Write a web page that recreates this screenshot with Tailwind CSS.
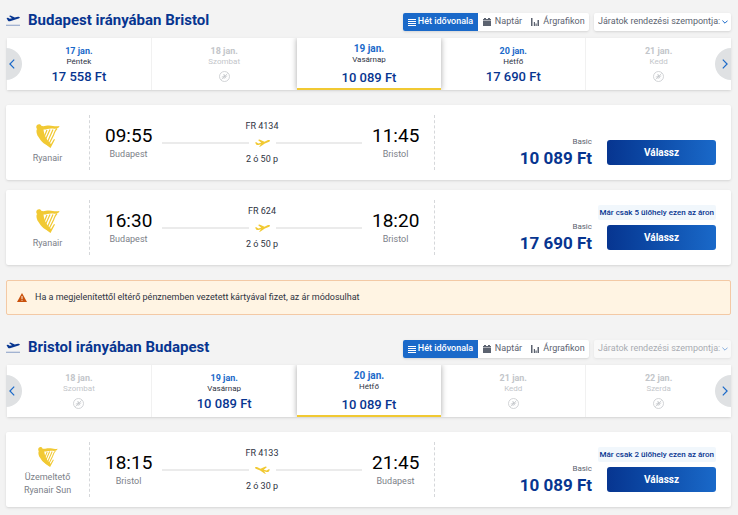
<!DOCTYPE html>
<html lang="hu">
<head>
    <meta charset="UTF-8">
    <title>Járatok kiválasztása</title>
    <meta name="viewport" content="width=device-width, initial-scale=1.0">
    <!-- Tailwind CSS CDN -->
    <script src="https://cdn.jsdelivr.net/npm/@tailwindcss/browser@4"></script>
</head>
<body class="bg-[#f3f3f3] font-[Roboto,sans-serif] text-[#2e333f] pl-1.5 pr-[7px] pt-[13px] pb-2">

    <!-- Shared icons -->
    <svg class="hidden">
        <symbol id="takeoff" viewBox="0 0 28 22">
            <path fill="currentColor" d="M1 6l3-.6 3.500 2.200 4.500-1L6 1.800 9 1l8.500 4.200L24 3.500c1.600-.4 3.200 0 3.500 1 .3 1.100-.8 2-2.300 2.500L8 12.500c-1.600.5-3 .1-4-1z"/>
            <path stroke="currentColor" stroke-width="1.500" opacity=".6" d="M0 20.500h28"/>
        </symbol>
        <symbol id="plane-up" viewBox="0 0 30 16">
            <path fill="currentColor" d="M0 7l3-.4L6.500 9l6-1.600L6 2.200 9 1.200l10 4.200L25 2.600c2-.8 4.300-.8 4.800.3.5 1.200-.8 2.300-2.600 3l-7.500 2.900L11 15l-3 .8 4-5.300-5 1.300c-2 .5-3.600.2-4.500-1z"/>
        </symbol>
        <symbol id="harp" viewBox="0 0 48 48">
            <path fill="currentColor" d="M2 2c3-3 8-2 9 2 6 1 9-1 15-1 8 0 12 3 21 1-1 5-7 6-13 5-8-1-12 2-19 2 1 10 5 20 15 29l6-10 2 1-9 17C14 38 4 27 2 10 0 8 0 4 2 2z"/>
            <path fill="currentColor" d="M2 10c-2 3-1 8 1 13l6 9c4 5 8 8 14 11L14 26z"/>
            <path fill="none" stroke="currentColor" stroke-width="2.500" d="M22 12l-5 12M28 11l-9 20M34 11L23 36M42 9c-5 5-5 8-7 13l-9 18"/>
        </symbol>
        <symbol id="no-flight" viewBox="0 0 22 22">
            <g fill="none" stroke="currentColor" stroke-width="1.500">
                <circle cx="11" cy="11" r="10"/>
                <path d="M5 17L17 5M5.500 12l11-2M9 6.500l5 8M10 16l1-9"/>
            </g>
        </symbol>
        <symbol id="chevron-left" viewBox="0 0 6 10">
            <path fill="none" stroke="currentColor" stroke-width="1.200" d="M5.200.6L.9 5l4.300 4.400"/>
        </symbol>
        <symbol id="chevron-right" viewBox="0 0 6 10">
            <path fill="none" stroke="currentColor" stroke-width="1.200" d="M.8.6L5.100 5 .8 9.400"/>
        </symbol>
        <symbol id="chevron-down" viewBox="0 0 6 4">
            <path fill="none" stroke="currentColor" d="M.4.6L3 3.200 5.600.6"/>
        </symbol>
        <symbol id="bars" viewBox="0 0 8 7">
            <path fill="currentColor" d="M0 0h8v1H0zM0 2h8v1H0zM0 4h8v1H0zM0 6h8v1H0z"/>
        </symbol>
        <symbol id="calendar" viewBox="0 0 8 8">
            <path fill="currentColor" d="M0 1h1V0h2v1h2V0h2v1h1v1.500H0zM0 3h8v5H0z"/>
        </symbol>
        <symbol id="chart" viewBox="0 0 8 8">
            <path fill="currentColor" d="M0 0h1.500v8H0zM2.800 4h1.200v4H2.800zM4.500 5.500h1.200V8H4.500zM6.500 2H8v6H6.500z"/>
        </symbol>
    </svg>

    <!-- Outbound -->
    <section>
        <div class="flex items-center h-[18px] mb-[7px]">
            <svg class="w-[14px] h-[11px] mr-2 mb-1 text-[#073590]"><use href="#takeoff"/></svg>
            <h2 class="text-[15px] leading-[18px] pb-1 font-bold text-[#073590]">Budapest irányában Bristol</h2>
            <div class="ml-auto flex h-full rounded-xs shadow-sm bg-white text-[9px] text-[#5c6370]">
                <button class="w-[75px] flex items-center justify-center gap-0.5 rounded-l-xs bg-[#1a69c9] text-white font-medium">
                    <svg class="w-2 h-[7px]"><use href="#bars"/></svg>Hét idővonala
                </button>
                <button class="w-[49px] flex items-center justify-center gap-1">
                    <svg class="w-2 h-2"><use href="#calendar"/></svg>Naptár
                </button>
                <button class="w-[62px] flex items-center justify-center gap-1">
                    <svg class="w-2 h-2"><use href="#chart"/></svg>Árgrafikon
                </button>
            </div>
            <div class="relative ml-[5px] w-[137px] h-full">
                <select aria-label="Rendezés" class="block appearance-none w-full h-full pl-1 rounded-xs bg-white shadow-sm text-[9px] text-[#5c6370]">
                    <option>Járatok rendezési szempontja:</option>
                </select>
                <svg class="absolute right-[3px] top-[7px] w-[6px] h-1 text-[#1a69c9] pointer-events-none"><use href="#chevron-down"/></svg>
            </div>
        </div>

        <div class="relative ml-px grid grid-cols-5 h-[52px] bg-white shadow-sm">
            <button class="flex flex-col items-center pt-[7px] border-r border-[#f1f1f1]">
                <span class="text-[9px] leading-3 font-bold text-[#1a69c9]">17 jan.</span>
                <span class="text-[8px] leading-[9px]">Péntek</span>
                <span class="mt-1 text-[13px] leading-[14px] font-medium text-[#073590]">17 558 Ft</span>
            </button>
            <button disabled class="flex flex-col items-center pt-[7px] text-[#c3c6ca]">
                <span class="text-[9px] leading-3 font-bold">18 jan.</span>
                <span class="text-[8px] leading-[9px]">Szombat</span>
                <svg class="mt-[5px] w-[11px] h-[11px]"><use href="#no-flight"/></svg>
            </button>
            <button class="flex flex-col items-center pt-[5px] border-b-2 border-[#f1c933] shadow-[0_0_6px_rgb(0_0_0/0.35)] [clip-path:inset(0_-8px)]">
                <span class="text-[10px] leading-3 font-bold text-[#1a69c9]">19 jan.</span>
                <span class="text-[8px] leading-[9px]">Vasárnap</span>
                <span class="mt-[7px] text-[13px] leading-[14px] font-medium text-[#073590]">10 089 Ft</span>
            </button>
            <button class="flex flex-col items-center pt-[7px] border-r border-[#f1f1f1]">
                <span class="text-[9px] leading-3 font-bold text-[#1a69c9]">20 jan.</span>
                <span class="text-[8px] leading-[9px]">Hétfő</span>
                <span class="mt-1 text-[13px] leading-[14px] font-medium text-[#073590]">17 690 Ft</span>
            </button>
            <button disabled class="flex flex-col items-center pt-[7px] text-[#c3c6ca]">
                <span class="text-[9px] leading-3 font-bold">21 jan.</span>
                <span class="text-[8px] leading-[9px]">Kedd</span>
                <svg class="mt-[5px] w-[11px] h-[11px]"><use href="#no-flight"/></svg>
            </button>
            <button aria-label="Előző" class="absolute -left-px top-[10px] w-4 h-8 rounded-r-full bg-[#dfe1e3] text-[#1a69c9] flex items-center pl-[3px]">
                <svg class="w-[6px] h-[10px]"><use href="#chevron-left"/></svg>
            </button>
            <button aria-label="Következő" class="absolute right-0 top-[10px] w-4 h-8 rounded-l-full bg-[#dfe1e3] text-[#1a69c9] flex items-center justify-end pr-[3px]">
                <svg class="w-[6px] h-[10px]"><use href="#chevron-right"/></svg>
            </button>
        </div>

        <div class="mt-[15px] space-y-[10px]">
            <article class="flex h-[75px] bg-white rounded-xs shadow-sm">
                <div class="w-[84px] my-[10px] pt-1 border-r border-dashed border-[#d5d7da] flex flex-col items-center justify-center text-[9px] leading-[13px] text-[#7b8088]">
                    <svg class="w-6 h-6 mb-1 text-[#f1c933]"><use href="#harp"/></svg>
                    Ryanair
                </div>
                <div class="flex-1 my-[10px] px-[15px] border-r border-dashed border-[#d5d7da] flex items-center gap-[10px]">
                    <div class="text-center w-[47px] pb-0.5">
                        <div class="text-[19px] leading-6 text-black">09:55</div>
                        <div class="text-[9px] leading-3 text-[#7b8088]">Budapest</div>
                    </div>
                    <div class="flex-1 text-center text-[9px] leading-[13px]">
                        <div>FR 4134</div>
                        <div class="flex items-center gap-[6px] h-5">
                            <span class="flex-1 h-0.5 bg-[#ebebeb]"></span>
                            <svg class="w-[15px] h-2 text-[#f1c933]"><use href="#plane-up"/></svg>
                            <span class="flex-1 h-0.5 bg-[#ebebeb]"></span>
                        </div>
                        <div>2 ó 50 p</div>
                    </div>
                    <div class="text-center w-[47px] pb-0.5">
                        <div class="text-[19px] leading-6 text-black">11:45</div>
                        <div class="text-[9px] leading-3 text-[#7b8088]">Bristol</div>
                    </div>
                </div>
                <div class="w-[296px] p-[15px] flex items-end justify-end gap-[15px]">
                    <div class="text-right">
                        <div class="text-[8px] leading-[9px] text-[#5c6370]">Basic</div>
                        <div class="text-[17px] leading-6 font-bold text-[#073590] -mb-[5px]">10 089 Ft</div>
                    </div>
                    <div class="flex flex-col items-end gap-[5px] w-[109px]">
                        <button class="w-full h-[25px] rounded-[3px] bg-linear-to-r from-[#073590] to-[#1a69c9] text-white text-[10px] font-bold">Válassz</button>
                    </div>
                </div>
            </article>

            <article class="flex h-[75px] bg-white rounded-xs shadow-sm">
                <div class="w-[84px] my-[10px] pt-1 border-r border-dashed border-[#d5d7da] flex flex-col items-center justify-center text-[9px] leading-[13px] text-[#7b8088]">
                    <svg class="w-6 h-6 mb-1 text-[#f1c933]"><use href="#harp"/></svg>
                    Ryanair
                </div>
                <div class="flex-1 my-[10px] px-[15px] border-r border-dashed border-[#d5d7da] flex items-center gap-[10px]">
                    <div class="text-center w-[47px] pb-0.5">
                        <div class="text-[19px] leading-6 text-black">16:30</div>
                        <div class="text-[9px] leading-3 text-[#7b8088]">Budapest</div>
                    </div>
                    <div class="flex-1 text-center text-[9px] leading-[13px]">
                        <div>FR 624</div>
                        <div class="flex items-center gap-[6px] h-5">
                            <span class="flex-1 h-0.5 bg-[#ebebeb]"></span>
                            <svg class="w-[15px] h-2 text-[#f1c933]"><use href="#plane-up"/></svg>
                            <span class="flex-1 h-0.5 bg-[#ebebeb]"></span>
                        </div>
                        <div>2 ó 50 p</div>
                    </div>
                    <div class="text-center w-[47px] pb-0.5">
                        <div class="text-[19px] leading-6 text-black">18:20</div>
                        <div class="text-[9px] leading-3 text-[#7b8088]">Bristol</div>
                    </div>
                </div>
                <div class="w-[296px] p-[15px] flex items-end justify-end gap-[15px]">
                    <div class="text-right">
                        <div class="text-[8px] leading-[9px] text-[#5c6370]">Basic</div>
                        <div class="text-[17px] leading-6 font-bold text-[#073590] -mb-[5px]">17 690 Ft</div>
                    </div>
                    <div class="flex flex-col items-end gap-[5px] w-[109px]">
                        <span class="px-0.5 rounded-xs bg-[#f1f7fc] text-[8px] leading-[15px] font-medium whitespace-nowrap text-[#073590]">Már csak 5 ülőhely ezen az áron</span>
                        <button class="w-full h-[25px] rounded-[3px] bg-linear-to-r from-[#073590] to-[#1a69c9] text-white text-[10px] font-bold">Válassz</button>
                    </div>
                </div>
            </article>
        </div>
    </section>

    <!-- Currency warning -->
    <div class="mt-[15px] h-[35px] px-[10px] flex items-center gap-2 rounded-xs border border-[#f3c9a5] bg-[#fff4e3] text-[9px]">
        <svg class="w-[10px] h-[9px]" viewBox="0 0 20 18">
            <path fill="#c9510c" d="M10 0l10 18H0z"/>
            <path stroke="#fff4e3" stroke-width="2" d="M10 6v6M10 13.500v2"/>
        </svg>
        Ha a megjelenítettől eltérő pénznemben vezetett kártyával fizet, az ár módosulhat
    </div>

    <!-- Return -->
    <section class="mt-[25px]">
        <div class="flex items-center h-[18px] mb-[7px]">
            <svg class="w-[14px] h-[11px] mr-2 mb-1 text-[#073590]"><use href="#takeoff"/></svg>
            <h2 class="text-[15px] leading-[18px] pb-1 font-bold text-[#073590]">Bristol irányában Budapest</h2>
            <div class="ml-auto flex h-full rounded-xs shadow-sm bg-white text-[9px] text-[#5c6370]">
                <button class="w-[75px] flex items-center justify-center gap-0.5 rounded-l-xs bg-[#1a69c9] text-white font-medium">
                    <svg class="w-2 h-[7px]"><use href="#bars"/></svg>Hét idővonala
                </button>
                <button class="w-[49px] flex items-center justify-center gap-1">
                    <svg class="w-2 h-2"><use href="#calendar"/></svg>Naptár
                </button>
                <button class="w-[62px] flex items-center justify-center gap-1">
                    <svg class="w-2 h-2"><use href="#chart"/></svg>Árgrafikon
                </button>
            </div>
            <div class="relative ml-[5px] w-[137px] h-full opacity-50">
                <select disabled aria-label="Rendezés" class="block appearance-none w-full h-full pl-1 rounded-xs bg-white shadow-sm text-[9px] text-[#5c6370] opacity-100">
                    <option>Járatok rendezési szempontja:</option>
                </select>
                <svg class="absolute right-[3px] top-[7px] w-[6px] h-1 text-[#1a69c9] pointer-events-none"><use href="#chevron-down"/></svg>
            </div>
        </div>

        <div class="relative ml-px grid grid-cols-5 h-[52px] bg-white shadow-sm">
            <button disabled class="flex flex-col items-center pt-[7px] border-r border-[#f1f1f1] text-[#c3c6ca]">
                <span class="text-[9px] leading-3 font-bold">18 jan.</span>
                <span class="text-[8px] leading-[9px]">Szombat</span>
                <svg class="mt-[5px] w-[11px] h-[11px]"><use href="#no-flight"/></svg>
            </button>
            <button class="flex flex-col items-center pt-[7px]">
                <span class="text-[9px] leading-3 font-bold text-[#1a69c9]">19 jan.</span>
                <span class="text-[8px] leading-[9px]">Vasárnap</span>
                <span class="mt-1 text-[13px] leading-[14px] font-medium text-[#073590]">10 089 Ft</span>
            </button>
            <button class="flex flex-col items-center pt-[5px] border-b-2 border-[#f1c933] shadow-[0_0_6px_rgb(0_0_0/0.35)] [clip-path:inset(0_-8px)]">
                <span class="text-[10px] leading-3 font-bold text-[#1a69c9]">20 jan.</span>
                <span class="text-[8px] leading-[9px]">Hétfő</span>
                <span class="mt-[7px] text-[13px] leading-[14px] font-medium text-[#073590]">10 089 Ft</span>
            </button>
            <button disabled class="flex flex-col items-center pt-[7px] border-r border-[#f1f1f1] text-[#c3c6ca]">
                <span class="text-[9px] leading-3 font-bold">21 jan.</span>
                <span class="text-[8px] leading-[9px]">Kedd</span>
                <svg class="mt-[5px] w-[11px] h-[11px]"><use href="#no-flight"/></svg>
            </button>
            <button disabled class="flex flex-col items-center pt-[7px] text-[#c3c6ca]">
                <span class="text-[9px] leading-3 font-bold">22 jan.</span>
                <span class="text-[8px] leading-[9px]">Szerda</span>
                <svg class="mt-[5px] w-[11px] h-[11px]"><use href="#no-flight"/></svg>
            </button>
            <button aria-label="Előző" class="absolute -left-px top-[10px] w-4 h-8 rounded-r-full bg-[#dfe1e3] text-[#1a69c9] flex items-center pl-[3px]">
                <svg class="w-[6px] h-[10px]"><use href="#chevron-left"/></svg>
            </button>
            <button aria-label="Következő" class="absolute right-0 top-[10px] w-4 h-8 rounded-l-full bg-[#dfe1e3] text-[#1a69c9] flex items-center justify-end pr-[3px]">
                <svg class="w-[6px] h-[10px]"><use href="#chevron-right"/></svg>
            </button>
        </div>

        <article class="mt-[15px] flex h-[75px] bg-white rounded-xs shadow-sm">
            <div class="w-[84px] my-[10px] pt-1 border-r border-dashed border-[#d5d7da] flex flex-col items-center justify-center text-center text-[9px] leading-[13px] text-[#7b8088]">
                <svg class="w-5 h-5 mb-1 text-[#f1c933]"><use href="#harp"/></svg>
                Üzemeltető<br>Ryanair Sun
            </div>
            <div class="flex-1 my-[10px] px-[15px] border-r border-dashed border-[#d5d7da] flex items-center gap-[10px]">
                <div class="text-center w-[47px] pb-0.5">
                    <div class="text-[19px] leading-6 text-black">18:15</div>
                    <div class="text-[9px] leading-3 text-[#7b8088]">Bristol</div>
                </div>
                <div class="flex-1 text-center text-[9px] leading-[13px]">
                    <div>FR 4133</div>
                    <div class="flex items-center gap-[6px] h-5">
                        <span class="flex-1 h-0.5 bg-[#ebebeb]"></span>
                        <svg class="w-[15px] h-2 text-[#f1c933] -scale-x-100"><use href="#plane-up"/></svg>
                        <span class="flex-1 h-0.5 bg-[#ebebeb]"></span>
                    </div>
                    <div>2 ó 30 p</div>
                </div>
                <div class="text-center w-[47px] pb-0.5">
                    <div class="text-[19px] leading-6 text-black">21:45</div>
                    <div class="text-[9px] leading-3 text-[#7b8088]">Budapest</div>
                </div>
            </div>
            <div class="w-[296px] p-[15px] flex items-end justify-end gap-[15px]">
                <div class="text-right">
                    <div class="text-[8px] leading-[9px] text-[#5c6370]">Basic</div>
                    <div class="text-[17px] leading-6 font-bold text-[#073590] -mb-[5px]">10 089 Ft</div>
                </div>
                <div class="flex flex-col items-end gap-[5px] w-[109px]">
                    <span class="px-0.5 rounded-xs bg-[#f1f7fc] text-[8px] leading-[15px] font-medium whitespace-nowrap text-[#073590]">Már csak 2 ülőhely ezen az áron</span>
                    <button class="w-full h-[25px] rounded-[3px] bg-linear-to-r from-[#073590] to-[#1a69c9] text-white text-[10px] font-bold">Válassz</button>
                </div>
            </div>
        </article>
    </section>

</body>
</html>
